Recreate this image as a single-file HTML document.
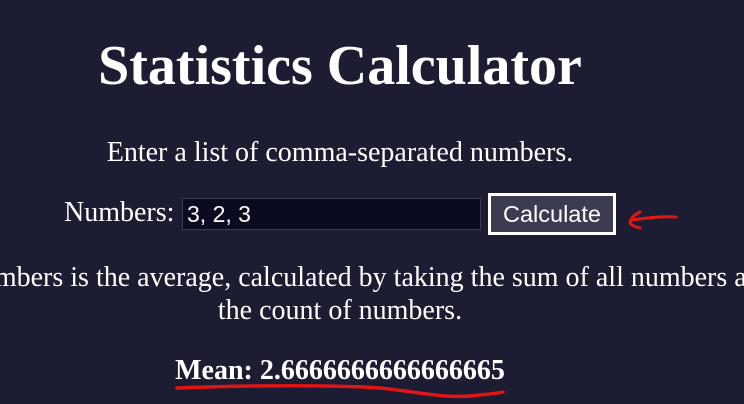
<!DOCTYPE html>
<html><head><meta charset="utf-8"><style>
html,body{margin:0;padding:0;width:744px;height:404px;overflow:hidden;background:#1c1c33;color:#fff;font-family:"Liberation Serif",serif;}
.wrap{position:absolute;left:0;top:0;width:744px;height:404px;overflow:hidden;}
.c{position:absolute;left:-400px;width:1480px;text-align:center;white-space:nowrap;}
h1{margin:0;font-size:56px;font-weight:bold;top:33px;line-height:66px;}
.sub{font-size:28px;top:136px;line-height:34px;}
.row{position:absolute;top:198px;left:64px;font-size:28px;}
.lbl{position:absolute;left:0;top:-2px;line-height:34px;}
.inp{position:absolute;left:118px;top:0;width:299px;height:32px;background:#0a0a20;border:1px solid #3a3a50;box-sizing:border-box;font-family:"Liberation Sans",sans-serif;font-size:23px;line-height:30px;padding-left:4px;}
.btn{position:absolute;left:424px;top:-5px;width:128px;height:42px;border:3px solid #fff;box-sizing:border-box;background:#3b3b51;}
.btn span{position:absolute;left:0;right:0;top:1px;margin:2px;text-align:center;font-family:"Liberation Sans",sans-serif;font-size:23.5px;line-height:30px;}
.p{font-size:28px;top:261px;line-height:33px;}
.p span{position:relative;left:-10px;}
.m{font-size:28px;font-weight:bold;top:354px;line-height:34px;}
</style></head><body><div class="wrap">
<h1 class="c">Statistics Calculator</h1>
<div class="c sub">Enter a list of comma-separated numbers.</div>
<div class="row"><span class="lbl">Numbers:</span><div class="inp">3, 2, 3</div><div class="btn"><span>Calculate</span></div></div>
<div class="c p"><span>The mean of a list of numbers is the average, calculated by taking the sum of all numbers and dividing it by</span><br>the count of numbers.</div>
<div class="c m">Mean: 2.6666666666666665</div>
<svg style="position:absolute;left:0;top:0" width="744" height="404">
<path d="M676 217 C660 216 645 218 632 220 M640 212 C634 215 630 219 630 223 C632 226 636 227 640 228" stroke="#e01515" stroke-width="3" fill="none" stroke-linecap="round"/>
<path d="M177 388 C250 385 340 385 380 388 C420 392 440 398 470 396 C490 394 500 393 503 392" stroke="#e01515" stroke-width="3.5" fill="none" stroke-linecap="round"/>
</svg>
</div></body></html>
